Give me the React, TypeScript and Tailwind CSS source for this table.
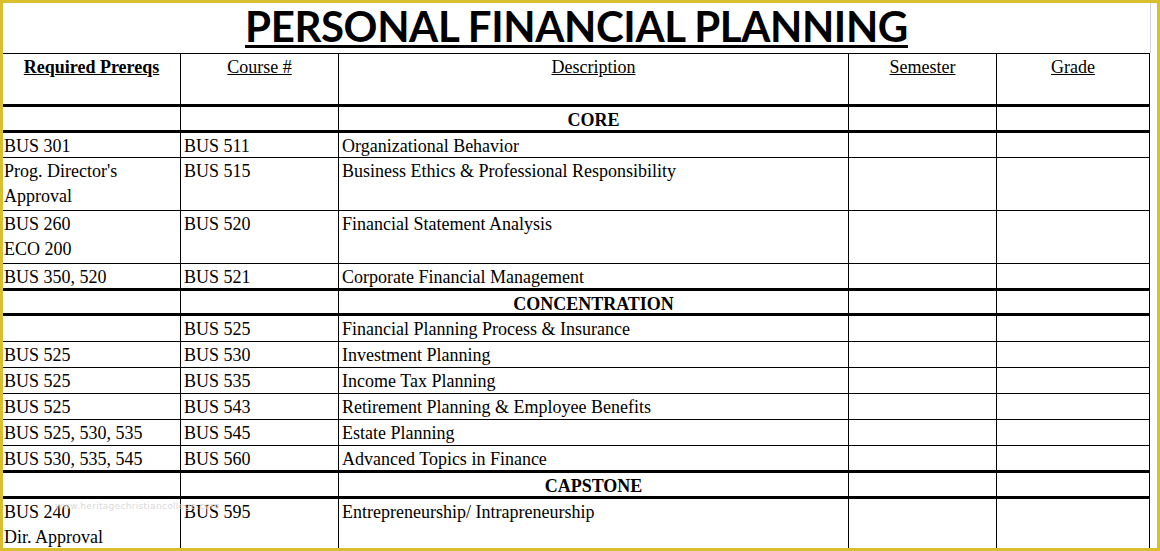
import React from "react";

type Row = {
  prereq: string[];
  course: string;
  desc: string;
  h: string;
  thick?: boolean;
};

type Section = {
  title: string;
  h: string;
  rows: Row[];
};

const sections: Section[] = [
  {
    title: "CORE",
    h: "h-[26px]",
    rows: [
      { prereq: ["BUS 301"], course: "BUS 511", desc: "Organizational Behavior", h: "h-[25px]" },
      { prereq: ["Prog. Director's", "Approval"], course: "BUS 515", desc: "Business Ethics & Professional Responsibility", h: "h-[53px]" },
      { prereq: ["BUS 260", "ECO 200"], course: "BUS 520", desc: "Financial Statement Analysis", h: "h-[53px]" },
      { prereq: ["BUS 350, 520"], course: "BUS 521", desc: "Corporate Financial Management", h: "h-[27px]", thick: true },
    ],
  },
  {
    title: "CONCENTRATION",
    h: "h-[25px]",
    rows: [
      { prereq: [""], course: "BUS 525", desc: "Financial Planning Process & Insurance", h: "h-[26px]" },
      { prereq: ["BUS 525"], course: "BUS 530", desc: "Investment Planning", h: "h-[26px]" },
      { prereq: ["BUS 525"], course: "BUS 535", desc: "Income Tax Planning", h: "h-[26px]" },
      { prereq: ["BUS 525"], course: "BUS 543", desc: "Retirement Planning & Employee Benefits", h: "h-[26px]" },
      { prereq: ["BUS 525, 530, 535"], course: "BUS 545", desc: "Estate Planning", h: "h-[26px]" },
      { prereq: ["BUS 530, 535, 545"], course: "BUS 560", desc: "Advanced Topics in Finance", h: "h-[27px]", thick: true },
    ],
  },
  {
    title: "CAPSTONE",
    h: "h-[26px]",
    rows: [
      { prereq: ["BUS 240", "Dir. Approval"], course: "BUS 595", desc: "Entrepreneurship/ Intrapreneurship", h: "h-[53px]" },
    ],
  },
];

const grid = "grid grid-cols-[178px_158px_510px_148px_153px] box-border";
const cell = "border-r border-black overflow-hidden";

export default function App() {
  return (
    <div className="w-[1160px] h-[551px] box-border border-[3px] border-[#d9be2d] bg-white overflow-hidden relative font-['Liberation_Serif','Times_New_Roman',serif] text-[18px] leading-[25px] text-black">
      <div className="w-[1148px] h-[50px] border-r border-[#d3d3dc] flex justify-center pt-[2px]">
        <h1 className="font-['Lato','Carlito',sans-serif] font-bold text-[42px] leading-[42px] tracking-[-0.4px] underline decoration-[3px] underline-offset-[3px]">
          PERSONAL FINANCIAL PLANNING
        </h1>
      </div>

      <div className="w-[1147px]">
        <div className={`${grid} h-[54px] border-t border-b-[3px] border-black`}>
          <div className={`${cell} text-center pt-px`}>
            <span className="font-bold underline">Required Prereqs</span>
          </div>
          <div className={`${cell} text-center pt-px`}>
            <span className="underline">Course #</span>
          </div>
          <div className={`${cell} text-center pt-px`}>
            <span className="underline">Description</span>
          </div>
          <div className={`${cell} text-center pt-px`}>
            <span className="underline">Semester</span>
          </div>
          <div className={`${cell} text-center pt-px`}>
            <span className="underline">Grade</span>
          </div>
        </div>

        {sections.map((s) => (
          <div key={s.title}>
            <div className={`${grid} ${s.h} border-b-[3px] border-black`}>
              <div className={cell} />
              <div className={cell} />
              <div className={`${cell} text-center font-bold pt-px`}>{s.title}</div>
              <div className={cell} />
              <div className={cell} />
            </div>
            {s.rows.map((r) => (
              <div
                key={r.course}
                className={`${grid} ${r.h} border-black ${r.thick ? "border-b-[3px]" : "border-b"}`}
              >
                <div className={`${cell} pl-px pt-px`}>
                  {r.prereq.map((p, i) => (
                    <div key={i}>{p}</div>
                  ))}
                </div>
                <div className={`${cell} pl-[3px] pt-px`}>{r.course}</div>
                <div className={`${cell} pl-[3px] pt-px whitespace-pre`}>{r.desc}</div>
                <div className={cell} />
                <div className={cell} />
              </div>
            ))}
          </div>
        ))}
      </div>

      {/* faint site watermark over the capstone row */}
      <div className="absolute left-[52px] top-[498px] font-['DejaVu_Sans',sans-serif] text-[9px] leading-[10px] text-[#dadada] tracking-[0.3px]">
        www.heritagechristiancollege.com
      </div>
    </div>
  );
}
